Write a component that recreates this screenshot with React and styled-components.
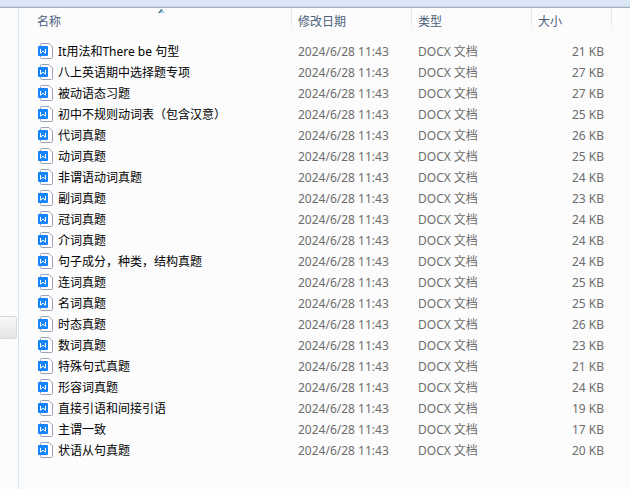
import React from 'react';
import styled, { createGlobalStyle } from 'styled-components';

const GlobalStyle = createGlobalStyle`
  body {
    margin: 0;
    background: #fcfcfc;
    font-family: "Noto Sans", "Noto Sans CJK SC", sans-serif;
    font-size: 12px;
    line-height: 20px;
  }
`;

const Explorer = styled.div`
  display: flex;
  flex-direction: column;
  min-height: 100vh;
`;

const TopStrip = styled.header`
  box-sizing: border-box;
  height: 8px;
  background: #dce7f5;
  border-bottom: 1px solid #a0afc3;
  box-shadow: inset 0 -1px #cbd8e8;
`;

const Body = styled.div`
  display: flex;
  flex: 1;
`;

const Sidebar = styled.aside`
  flex: 0 0 18px;
  padding-top: 308px;
  border-right: 1px solid #d6e5f5;
`;

const SidebarItem = styled.button`
  display: block;
  width: 17px;
  height: 23px;
  padding: 0;
  border: 1px solid #d9d9d9;
  border-left: 0;
  border-radius: 0 3px 3px 0;
  background: linear-gradient(#f8f8f8, #e5e5e5);
`;

const Main = styled.main`
  flex: 1;
  min-width: 0;
`;

const FileTable = styled.table`
  width: 100%;
  table-layout: fixed;
  border-collapse: collapse;
`;

const Column = styled.col`
  width: ${({ $width }) => $width};
`;

const HeadCell = styled.th`
  position: relative;
  height: 33px;
  padding: 0 0 0 ${({ $first }) => ($first ? '18px' : '6px')};
  vertical-align: top;
  text-align: left;
  font-weight: 400;
  background: linear-gradient(#dfe9f5, #dfe9f5 60%, #fcfcfc) right top / 1px 24px no-repeat;
`;

const SortButton = styled.button`
  display: block;
  padding: 4px 0 0;
  border: 0;
  background: none;
  color: #4c607a;
  font: inherit;
`;

// sits on the top edge of the sorted column
const SortArrow = styled.svg`
  position: absolute;
  top: 1px;
  left: 50%;
  margin-left: 2px;
`;

const FileRow = styled.tr`
  height: 21px;
`;

const Cell = styled.td`
  padding: 0 8px 0 6px;
  color: #6d6d6d;
  text-align: ${({ $align }) => $align || 'left'};
  white-space: nowrap;
`;

const NameCell = styled(Cell)`
  padding-left: 19px;
  color: #000;
`;

const FileName = styled.div`
  display: flex;
  align-items: center;
  gap: 4px;
  height: 21px;
`;

const files = [
  ['It用法和There be 句型', 21],
  ['八上英语期中选择题专项', 27],
  ['被动语态习题', 27],
  ['初中不规则动词表（包含汉意）', 25],
  ['代词真题', 26],
  ['动词真题', 25],
  ['非谓语动词真题', 24],
  ['副词真题', 23],
  ['冠词真题', 24],
  ['介词真题', 24],
  ['句子成分，种类，结构真题', 24],
  ['连词真题', 25],
  ['名词真题', 25],
  ['时态真题', 26],
  ['数词真题', 23],
  ['特殊句式真题', 21],
  ['形容词真题', 24],
  ['直接引语和间接引语', 19],
  ['主谓一致', 17],
  ['状语从句真题', 20],
];

const DocIcon = () => (
  <svg width="16" height="17" viewBox="0 0 16 17" aria-hidden="true">
    <path
      d="M3.5 .5H11L14.5 4V14.5Q14.5 15.5 13.5 15.5H3.5Q2.5 15.5 2.5 14.5V1.5Q2.5 .5 3.5 .5Z"
      fill="#fdfdfd"
      stroke="#9aa3b5"
    />
    <rect x="0" y="3" width="10" height="10" rx="1" fill="#1684fc" />
    <path d="M2.5 6V10.2L5 8.2L7.5 10.2V6" fill="none" stroke="#fff" />
  </svg>
);

const App = () => {
  return (
    <Explorer>
      <GlobalStyle />
      <TopStrip />
      <Body>
        <Sidebar>
          <SidebarItem type="button" aria-label="导航窗格" />
        </Sidebar>
        <Main>
          <FileTable>
            <colgroup>
              <Column />
              <Column $width="120px" />
              <Column $width="120px" />
              <Column $width="80px" />
              <Column $width="18px" />
            </colgroup>
            <thead>
              <tr>
                <HeadCell $first aria-sort="ascending">
                  <SortButton type="button">名称</SortButton>
                  <SortArrow width="7" height="4" viewBox="0 0 7 4" aria-hidden="true">
                    <path d="M3.5 0L7 4H0Z" fill="#9fd0ea" />
                    <path d="M3.5 0L4.5 1L1.2 4H0Z" fill="#3c5e78" />
                  </SortArrow>
                </HeadCell>
                <HeadCell><SortButton type="button">修改日期</SortButton></HeadCell>
                <HeadCell><SortButton type="button">类型</SortButton></HeadCell>
                <HeadCell><SortButton type="button">大小</SortButton></HeadCell>
                <td />
              </tr>
            </thead>
            <tbody>
              {files.map(([name, size]) => (
                <FileRow key={name}>
                  <NameCell>
                    <FileName>
                      <DocIcon />
                      <span>{name}</span>
                    </FileName>
                  </NameCell>
                  <Cell>2024/6/28 11:43</Cell>
                  <Cell>DOCX 文档</Cell>
                  <Cell $align="right">{size} KB</Cell>
                  <td />
                </FileRow>
              ))}
            </tbody>
          </FileTable>
        </Main>
      </Body>
    </Explorer>
  );
};

export default App;
